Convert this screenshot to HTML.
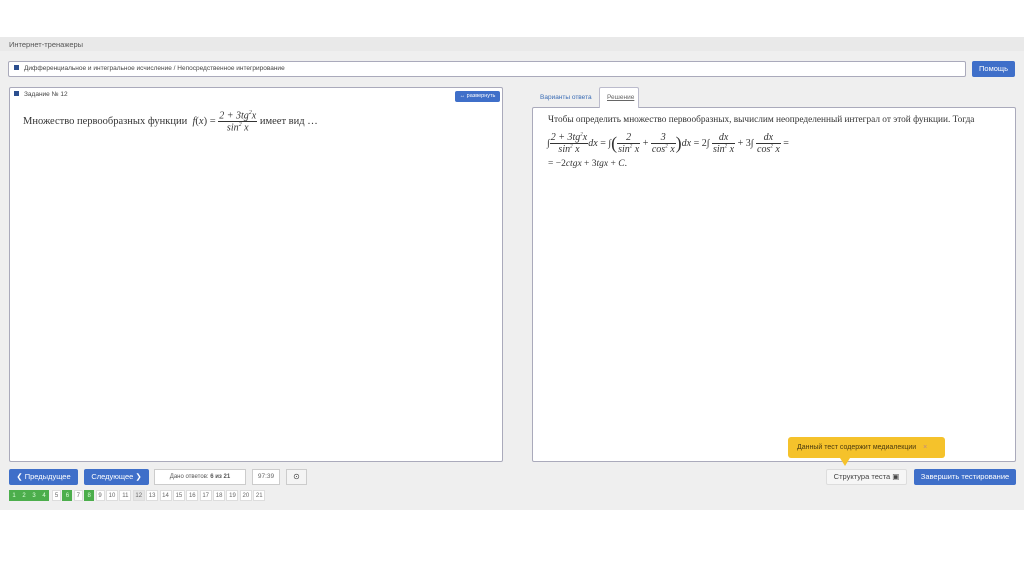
<!DOCTYPE html>
<html><head><meta charset="utf-8"><style>
*{box-sizing:border-box;margin:0;padding:0}
body{width:1024px;height:574px;background:#fff;font-family:"Liberation Sans",sans-serif;position:relative;overflow:hidden;color:#333}
.gray{position:absolute;left:0;top:37px;width:1024px;height:473px;background:#efefef}
.abs{position:absolute}
.hdr{left:0;top:37px;width:1024px;height:14px;background:#e9e9e9;font-size:7.5px;color:#555;padding:3px 9px}
.box{background:#fff;border:1px solid #aab;border-radius:2px}
.sq{display:inline-block;width:5px;height:5px;background:#2c4f8f;margin-right:5px;vertical-align:0}
.btn{background:#3f6fc9;color:#fff;border-radius:2px;font-size:7.5px;text-align:center}
.ser{font-family:"Liberation Serif",serif;color:#333}
.frac{display:inline-block;vertical-align:middle;text-align:center;font-style:italic}
.frac span{display:block;padding:0 1px}
.frac .n{border-bottom:1px solid #333}
i{font-style:italic}
.pg{display:flex;position:absolute;left:9px;top:490px}
.pg div{height:11px;font-size:6px;line-height:11px;text-align:center;border:1px solid #ddd;background:#fff;color:#666;margin-right:1.4px;width:9px}
.pg div.d{width:12px}
.pg div.g{background:#4cae4c;color:#dfd;border-color:#4cae4c;margin-right:0;width:10px}
.pg div.c{background:#e5e5e5}
</style></head><body>
<div class="gray"></div>
<div class="abs hdr">Интернет-тренажеры</div>
<div class="abs box" style="left:8px;top:61px;width:958px;height:16px;font-size:6.5px;padding:3px 5px;color:#444"><span class="sq"></span>Дифференциальное и интегральное исчисление / Непосредственное интегрирование</div>
<div class="abs btn" style="left:972px;top:61px;width:43px;height:16px;line-height:16px">Помощь</div>

<div class="abs box" style="left:9px;top:87px;width:494px;height:375px">
 <div style="font-size:6.5px;padding:3px 4px;color:#444"><span class="sq"></span>Задание № 12</div>
 <div class="abs btn" style="left:445px;top:3px;width:45px;height:11px;line-height:11px;font-size:5.5px">↔ развернуть</div>
 <div class="abs ser" style="left:13px;top:22px;font-size:10.5px;white-space:nowrap">Множество первообразных функции &nbsp;<i>f</i>(<i>x</i>) = <span class="frac" style="font-size:10px"><span class="n">2 + 3<i>tg</i><sup style="font-size:6px">2</sup><i>x</i></span><span>sin<sup style="font-size:6px">2</sup> <i>x</i></span></span> имеет вид …</div>
</div>

<div class="abs" style="left:532px;top:88px;font-size:6.5px;color:#3a6cb5;padding:6px 8px">Варианты ответа</div>
<div class="abs" style="left:599px;top:87px;width:40px;height:21px;background:#fff;border:1px solid #bbc;border-bottom:none;border-radius:2px 2px 0 0;font-size:6.5px;color:#666;padding:6px 7px;text-decoration:underline;z-index:2">Решение</div>
<div class="abs box" style="left:532px;top:107px;width:484px;height:355px">
 <div class="ser" style="position:absolute;left:15px;top:7px;font-size:9.3px;white-space:nowrap">Чтобы определить множество первообразных, вычислим неопределенный интеграл от этой функции. Тогда</div>
 <div class="ser" style="position:absolute;left:14px;top:24px;font-size:10px;white-space:nowrap">∫<span class="frac"><span class="n">2 + 3<i>tg</i><sup style="font-size:5px">2</sup><i>x</i></span><span>sin<sup style="font-size:5px">2</sup> <i>x</i></span></span><i>dx</i> = ∫<span style="font-size:18px;vertical-align:middle">(</span><span class="frac"><span class="n">2</span><span>sin<sup style="font-size:5px">2</sup> <i>x</i></span></span> + <span class="frac"><span class="n">3</span><span>cos<sup style="font-size:5px">2</sup> <i>x</i></span></span><span style="font-size:18px;vertical-align:middle">)</span><i>dx</i> = 2∫ <span class="frac"><span class="n"><i>dx</i></span><span>sin<sup style="font-size:5px">2</sup> <i>x</i></span></span> + 3∫ <span class="frac"><span class="n"><i>dx</i></span><span>cos<sup style="font-size:5px">2</sup> <i>x</i></span></span> =</div>
 <div class="ser" style="position:absolute;left:15px;top:51px;font-size:9.5px">= −2<i>ctgx</i> + 3<i>tgx</i> + <i>C</i>.</div>
</div>

<div class="abs btn" style="left:9px;top:469px;width:69px;height:16px;line-height:16px">❮ Предыдущее</div>
<div class="abs btn" style="left:84px;top:469px;width:65px;height:16px;line-height:16px">Следующее ❯</div>
<div class="abs" style="left:154px;top:469px;width:92px;height:16px;background:#fff;border:1px solid #ccc;font-size:6px;line-height:14px;text-align:center;color:#555">Дано ответов: <b>6 из 21</b></div>
<div class="abs" style="left:252px;top:469px;width:28px;height:16px;background:#fff;border:1px solid #ccc;font-size:6.5px;line-height:14px;text-align:center;color:#666">97:39</div>
<div class="abs" style="left:286px;top:469px;width:21px;height:16px;background:#f4f4f4;border:1px solid #ccc;font-size:8px;line-height:14px;text-align:center;color:#444">⊙</div>

<div class="pg">
<div class="g">1</div><div class="g">2</div><div class="g">3</div><div class="g" style="margin-right:3px">4</div><div>5</div><div class="g" style="margin-right:1.4px">6</div><div>7</div><div class="g" style="margin-right:1.4px">8</div><div>9</div><div class="d">10</div><div class="d">11</div><div class="d c">12</div><div class="d">13</div><div class="d">14</div><div class="d">15</div><div class="d">16</div><div class="d">17</div><div class="d">18</div><div class="d">19</div><div class="d">20</div><div class="d">21</div>
</div>

<div class="abs" style="left:788px;top:437px;width:157px;height:21px;background:#f5c22b;border-radius:3px;font-size:7px;line-height:21px;padding-left:9px;color:#4a3a10">Данный тест содержит медиалекции <span style="color:#b88;margin-left:5px">×</span></div>
<div class="abs" style="left:840px;top:458px;width:0;height:0;border-left:5px solid transparent;border-right:5px solid transparent;border-top:8px solid #f5c22b"></div>
<div class="abs" style="left:826px;top:469px;width:81px;height:16px;background:#f6f6f6;border:1px solid #ddd;border-radius:2px;font-size:7.5px;line-height:14px;text-align:center;color:#444">Структура теста ▣</div>
<div class="abs btn" style="left:914px;top:469px;width:102px;height:16px;line-height:16px">Завершить тестирование</div>
</body></html>
